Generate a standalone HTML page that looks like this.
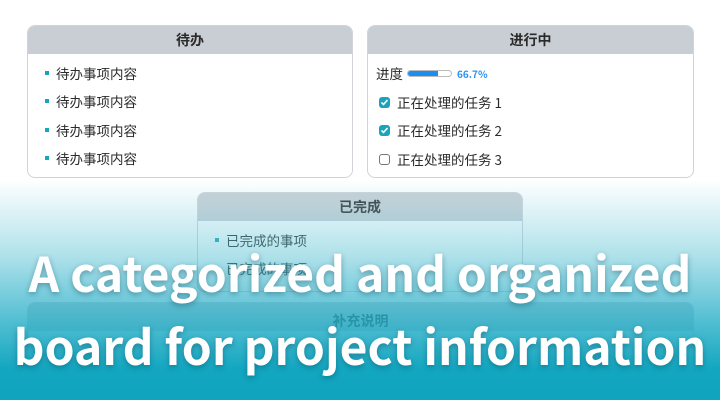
<!DOCTYPE html>
<html><head><meta charset="utf-8"><style>
*{margin:0;padding:0;box-sizing:border-box}
html,body{width:720px;height:400px;overflow:hidden}
body{position:relative;background:#fff;font-family:"Liberation Sans","Noto Sans CJK SC",sans-serif;color:#333}
.card{position:absolute;background:#fff;border:1.5px solid #d0d4d9;border-radius:8px;overflow:hidden}
.hd{height:28px;background:#c9ced4;text-align:center;font:bold 14px/28px "Noto Sans CJK SC",sans-serif;color:#2a2a2a}
.li{position:absolute;left:17px;font:13.5px "Noto Sans CJK SC",sans-serif;color:#2a2a2a;display:flex;align-items:center}
.li i{display:inline-block;width:4px;height:4px;background:#1aa3bd;margin-right:7px}
.cb{display:inline-block;width:11px;height:11px;border-radius:3px;margin-right:7px;background:#1aa3bd;position:relative}
.cb.off{background:#fff;border:1.5px solid #777}
.cb svg{position:absolute;left:1px;top:1px}
.ov{position:absolute;left:0;top:0;width:720px;height:400px;background:linear-gradient(to bottom,rgba(255,255,255,0) 0,rgba(255,255,255,0) 180px,rgba(150,215,228,.25) 205px,rgba(80,190,210,.45) 255px,rgba(40,175,200,.8) 320px,#12a6c0 370px,#10a4be 400px)}
.t{position:absolute;left:0;width:720px;text-align:center;color:#fff;font:bold 48px "Noto Sans CJK SC",sans-serif;text-shadow:0 2px 6px rgba(0,60,80,.4)}
</style></head><body>
<div class="card" style="left:27px;top:25px;width:326px;height:153px">
<div class="hd">待办</div>
<div class="li" style="top:37px"><i></i>待办事项内容</div>
<div class="li" style="top:65px"><i></i>待办事项内容</div>
<div class="li" style="top:94px"><i></i>待办事项内容</div>
<div class="li" style="top:122px"><i></i>待办事项内容</div>
</div>
<div class="card" style="left:367px;top:25px;width:327px;height:153px">
<div class="hd">进行中</div>
<div class="li" style="left:8px;top:37px">进度<span style="display:inline-block;width:45px;height:7px;border:1px solid #bbb;border-radius:4px;margin:0 5px 0 4px;position:relative;overflow:hidden"><span style="position:absolute;left:0;top:0;width:30px;height:100%;background:#1a8ff0"></span></span><b style="color:#2a90f0;font-size:10px">66.7%</b></div>
<div class="li" style="left:11px;top:66px"><span class="cb"><svg width="9" height="9" viewBox="0 0 9 9"><path d="M1.5 4.5l2 2 4-4.5" stroke="#fff" stroke-width="1.6" fill="none"/></svg></span>正在处理的任务 1</div>
<div class="li" style="left:11px;top:94px"><span class="cb"><svg width="9" height="9" viewBox="0 0 9 9"><path d="M1.5 4.5l2 2 4-4.5" stroke="#fff" stroke-width="1.6" fill="none"/></svg></span>正在处理的任务 2</div>
<div class="li" style="left:11px;top:123px"><span class="cb off"></span>正在处理的任务 3</div>
</div>
<div class="card" style="left:197px;top:192px;width:326px;height:100px">
<div class="hd">已完成</div>
<div class="li" style="top:37px"><i></i>已完成的事项</div>
<div class="li" style="top:65px"><i></i>已完成的事项</div>
</div>
<div class="card" style="left:27px;top:302px;width:667px;height:90px">
<div class="hd" style="padding-top:4px">补充说明</div>
</div>
<div class="ov"></div>
<div class="t" style="top:236px">A categorized and organized</div>
<div class="t" style="top:309px">board for project information</div>
</body></html>
